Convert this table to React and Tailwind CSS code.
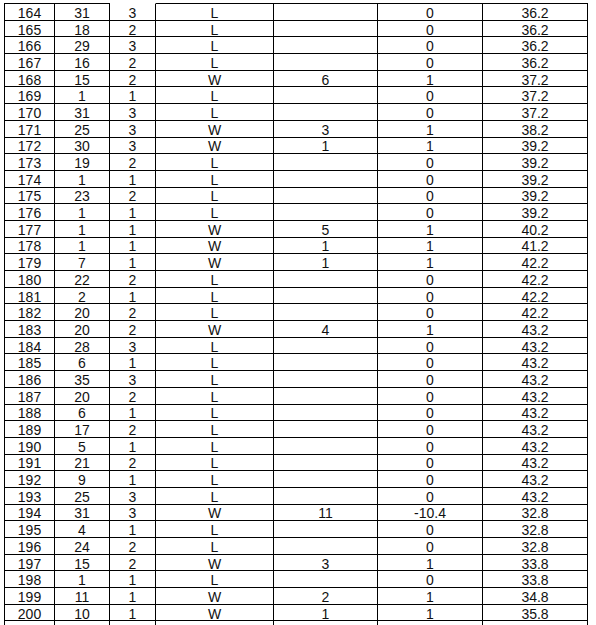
const rows = [
  [164, 31, 3, "L", "", "0", "36.2"],
  [165, 18, 2, "L", "", "0", "36.2"],
  [166, 29, 3, "L", "", "0", "36.2"],
  [167, 16, 2, "L", "", "0", "36.2"],
  [168, 15, 2, "W", "6", "1", "37.2"],
  [169, 1, 1, "L", "", "0", "37.2"],
  [170, 31, 3, "L", "", "0", "37.2"],
  [171, 25, 3, "W", "3", "1", "38.2"],
  [172, 30, 3, "W", "1", "1", "39.2"],
  [173, 19, 2, "L", "", "0", "39.2"],
  [174, 1, 1, "L", "", "0", "39.2"],
  [175, 23, 2, "L", "", "0", "39.2"],
  [176, 1, 1, "L", "", "0", "39.2"],
  [177, 1, 1, "W", "5", "1", "40.2"],
  [178, 1, 1, "W", "1", "1", "41.2"],
  [179, 7, 1, "W", "1", "1", "42.2"],
  [180, 22, 2, "L", "", "0", "42.2"],
  [181, 2, 1, "L", "", "0", "42.2"],
  [182, 20, 2, "L", "", "0", "42.2"],
  [183, 20, 2, "W", "4", "1", "43.2"],
  [184, 28, 3, "L", "", "0", "43.2"],
  [185, 6, 1, "L", "", "0", "43.2"],
  [186, 35, 3, "L", "", "0", "43.2"],
  [187, 20, 2, "L", "", "0", "43.2"],
  [188, 6, 1, "L", "", "0", "43.2"],
  [189, 17, 2, "L", "", "0", "43.2"],
  [190, 5, 1, "L", "", "0", "43.2"],
  [191, 21, 2, "L", "", "0", "43.2"],
  [192, 9, 1, "L", "", "0", "43.2"],
  [193, 25, 3, "L", "", "0", "43.2"],
  [194, 31, 3, "W", "11", "-10.4", "32.8"],
  [195, 4, 1, "L", "", "0", "32.8"],
  [196, 24, 2, "L", "", "0", "32.8"],
  [197, 15, 2, "W", "3", "1", "33.8"],
  [198, 1, 1, "L", "", "0", "33.8"],
  [199, 11, 1, "W", "2", "1", "34.8"],
  [200, 10, 1, "W", "1", "1", "35.8"],
];

export default function App() {
  return (
    <div className="w-[596px] h-[625px] overflow-hidden bg-white" style={{ fontFamily: '"Liberation Sans", Arial, sans-serif' }}>
      <div className="ml-[4px] mt-[3px] w-[584px] border-l border-black grid grid-cols-[50px_55px_46px_118px_104px_105px_105px] text-[14px] text-[#111]">
        {rows.map((r, i) =>
          r.map((c, j) => (
            <div
              key={i + "-" + j}
              className={
                "flex items-center justify-center border-r border-b border-black leading-none pt-[2px] " +
                (i === 0 ? (j === 2 ? "h-[17.7px] border-t border-t-white" : "h-[17.7px] border-t") : "h-[16.7px]")
              }
            >
              {c}
            </div>
          ))
        )}
        {[0, 1, 2, 3, 4, 5, 6].map((j) => (
          <div key={"x" + j} className="h-[16.7px] border-r border-black" />
        ))}
      </div>
    </div>
  );
}
